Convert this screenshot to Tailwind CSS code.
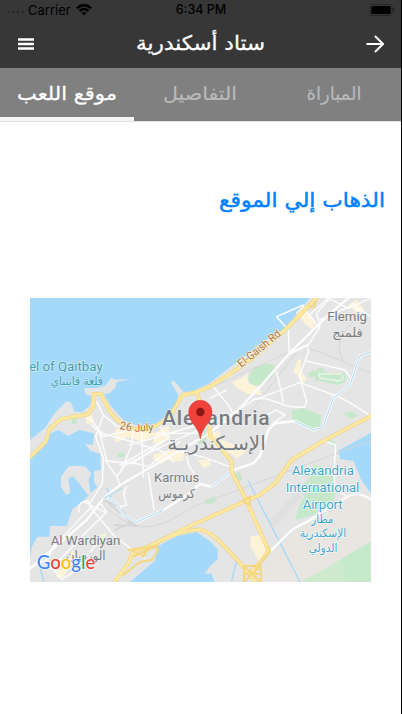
<!DOCTYPE html>
<html lang="ar">
<head>
<meta charset="utf-8">
<meta name="viewport" content="width=device-width, initial-scale=1">
<title>ستاد أسكندرية</title>
<script src="https://cdn.jsdelivr.net/npm/@tailwindcss/browser@4"></script>
</head>
<body class="bg-white overflow-hidden font-['DejaVu_Sans',sans-serif]">
<div class="w-[402px] h-[714px] border-r border-black flex flex-col overflow-hidden">
  <header class="h-[68px] shrink-0 bg-[#373737] flex flex-col">
    <div class="h-5 shrink-0 grid grid-cols-3 items-center pl-[7px] pr-[6px] text-[13px] leading-5 text-black font-['Inter',sans-serif]">
      <div class="flex items-center">
        <svg class="w-[18px] h-2 mt-1.5 shrink-0" viewBox="0 0 18 8" fill="#252525"><circle cx="1.5" cy="3" r="1.2"/><circle cx="6.3" cy="3" r="1.2"/><circle cx="11" cy="3" r="1.2"/><circle cx="15.6" cy="3" r="1.2"/></svg>
        <span class="ml-[3px] w-[43px] whitespace-nowrap">Carrier</span>
        <svg class="ml-[5px] w-4 h-3 shrink-0" viewBox="0 0 16 12" fill="none" stroke="#000" stroke-width="2.4"><path d="M1 4.3Q8-2 15 4.3M3.6 7Q8 3 12.4 7"/><path d="M5.5 9Q8 6.8 10.5 9L8 11.5Z" fill="#000" stroke="none"/></svg>
      </div>
      <span class="text-center text-[12.5px] font-medium whitespace-nowrap">6:34 PM</span>
      <svg class="justify-self-end w-[26px] h-3" viewBox="0 0 26 12"><rect x=".8" y=".5" width="22.5" height="11" rx="3" fill="none" stroke="#252525"/><rect x="2.3" y="2" width="19.5" height="8" rx="1.5" fill="#000"/><path d="M24.7 4v4" stroke="#252525" stroke-width="1.2"/></svg>
    </div>
    <div class="h-12 grid grid-cols-[40px_1fr_40px] items-center text-white">
      <svg class="ml-[18px] w-4 h-3" viewBox="0 0 16 12" stroke="#fff" stroke-width="2.4"><path d="M0 1.5h16M0 6h16M0 10.5h16"/></svg>
      <svg class="justify-self-center w-[130px] h-8" viewBox="0 0 130 32" direction="rtl"><text x="129" y="22" font-size="20" fill="#fff" stroke="#fff" stroke-width=".3" textLength="129" lengthAdjust="spacingAndGlyphs">ستاد أسكندرية</text></svg>
      <svg class="ml-[5px] w-[18px] h-[18px]" viewBox="0 0 18 18" fill="none" stroke="#fff" stroke-width="2"><path d="M.5 9h16M9 1l8 8-8 8"/></svg>
    </div>
  </header>
  <nav class="h-[54px] shrink-0 bg-[#808080] grid grid-cols-3 border-b border-[#e2e2e2]">
    <div class="border-b-4 border-[#f5f5f5] flex justify-center">
      <svg class="w-[102px] h-12" viewBox="0 0 102 48" direction="rtl"><text x="101" y="32" font-size="19" fill="#fff" stroke="#fff" stroke-width=".3" textLength="100" lengthAdjust="spacingAndGlyphs">موقع اللعب</text></svg>
    </div>
    <div class="flex justify-center">
      <svg class="w-[76px] h-12" viewBox="0 0 76 48" direction="rtl"><text x="75" y="32" font-size="19" fill="#b9b9b9" stroke="#b9b9b9" stroke-width=".2" textLength="74" lengthAdjust="spacingAndGlyphs">التفاصيل</text></svg>
    </div>
    <div class="flex justify-center">
      <svg class="w-[56px] h-12" viewBox="0 0 56 48" direction="rtl"><text x="55.5" y="32" font-size="19" fill="#b9b9b9" stroke="#b9b9b9" stroke-width=".2" textLength="55" lengthAdjust="spacingAndGlyphs">المباراة</text></svg>
    </div>
  </nav>
  <main class="flex flex-col flex-1">
    <a class="mt-[59px] mr-4 self-end h-9">
      <svg class="w-[167px] h-9" viewBox="0 0 167 36" direction="rtl"><text x="167" y="25.5" font-size="20" fill="#0080ff" stroke="#0080ff" stroke-width=".45" textLength="166" lengthAdjust="spacingAndGlyphs">الذهاب إلي الموقع</text></svg>
    </a>
    <div class="mt-[81px] ml-[30px] w-[341px] h-[284px]">
    <svg class="block w-full h-full" viewBox="30 24 1023 852" fill="none" stroke-linejoin="round" stroke-linecap="round">
      <rect x="30" y="24" width="1023" height="852" fill="#e5e5e5"/>
      <!-- Airport plains and south-east fields -->
      <path d="M1053 620L985 612 870 690 790 755 700 876H1053Z" fill="#e9e6e2"/>
      <path d="M845 876L1053 755V876Z" fill="#cfe9cf"/>
      <path d="M962 808L1053 755V876H975Z" fill="#c6e8cb"/>
      <!-- Sea -->
      <path d="M30 24H870L795 115 745 145 650 217 565 282 520 302 492 307 462 273 452 275 475 315 467 345 447 370 412 398Q360 420 310 390L274 350 252 312 268 310 286 293 290 276 332 266 290 269 274 264 257 286 232 294 193 294 196 311 216 321 209 349 187 366 165 366 152 337 140 333 105 368 75 414 30 450Z" fill="#a5d9fb"/>
      <path d="M30 508L84 452 90 430 116 420 145 438 178 420 222 430 219 464 195 462 212 483 240 492 243 540 222 542 222 577 232 592 211 610 205 568 212 550 196 530 170 527 145 530 124 560 123 590 138 612 150 608 142 578 148 556 170 555 196 584 209 612 185 638 158 656 140 708H90L88 740 52 740 36 770 30 800Z" fill="#a5d9fb"/>
      <path d="M145 530L170 527 197 532 213 552 205 570 211 610 203 615 183 588 160 559 145 567 151 609 138 614 124 592 123 562Z" fill="#e5e5e5"/>
      <path d="M330 876L405 812 412 770 470 738 530 726 570 754 594 779 592 809 574 824 552 853 553 876Z" fill="#a5d9fb"/>
      <path d="M553 876L550 852 574 850 584 876Z" fill="#a5d9fb"/>
      <path d="M1053 428L955 482 960 507 1000 513 1022 566 1053 611Z" fill="#a5d9fb"/>
      <!-- Parks -->
      <g fill="#c5e8ca">
        <path d="M700 237Q730 213 765 225L763 248Q740 293 695 285 674 268 700 237Z"/>
        <path d="M814 361L850 354 903 376 902 409 876 416 818 394Z"/>
        <path d="M864 248L882 241 888 258 868 263ZM885 243Q911 222 916 248L974 248Q990 280 950 284L885 270ZM156 386L168 384 172 401 156 402ZM292 493L304 486 316 492 312 502 293 502ZM528 452L540 430 555 402 558 450 540 462ZM556 631L584 618 590 635 560 645ZM644 551L659 545 667 568 651 576ZM970 371L995 363 1012 376 996 387ZM920 445L944 455 950 469 935 463Z"/>
        <path d="M829 600L865 568 882 523 906 530 912 556 944 558 944 630 880 674 825 691 836 651 858 612Z"/>
      </g>
      <path d="M896 252L965 252Q976 269 955 273L900 264Z" stroke="#e9f4e9" stroke-width="4"/>
      <!-- Commercial blocks -->
      <g fill="#fdf3d8">
        <path d="M286 417L350 414 404 430 445 406 451 438 425 462 398 459 402 436 365 455 325 442 285 458ZM400 492L460 480 492 484 490 512 462 515 445 508 424 522 400 508Z"/>
        <path d="M636 276L668 263 682 248 684 278 720 294 724 315 680 311 650 292ZM827 69L848 48 885 94 880 122 852 98 838 75ZM820 247L832 212 845 206 841 242 860 266 845 284 833 254ZM196 382L217 374 222 398 200 403ZM693 738L720 735 744 795 714 811 690 765ZM560 438L598 420 600 446 638 462 680 475 672 491 650 505 632 490 590 477ZM534 511L568 507 572 524 549 534ZM105 842L150 808 157 780 170 805 130 862 110 862ZM240 735L260 728 246 758ZM602 262L630 247 636 257 612 269ZM985 45L1010 30 1032 60 1012 72Z"/>
      </g>
      <!-- Airport runway, rail lines -->
      <path d="M760 695L850 600" stroke="#e0e0e0" stroke-width="24"/>
      <g stroke="#d5d6d8" stroke-width="3">
        <path d="M255 650Q310 700 360 710 420 718 520 650L1053 452"/>
        <path d="M240 630Q310 640 330 700L285 720M268 642L345 705M285 705L355 708" stroke-width="6"/>
        <path d="M560 300L700 235 800 190 855 172 910 190 1053 250M640 410Q710 350 750 290L830 186M1000 95Q930 160 975 220"/>
      </g>
      <!-- Canals -->
      <g stroke="#a5d9fb" stroke-width="4">
        <path d="M685 573L840 876M55 815L72 876M650 815L635 870M260 593L272 622"/>
      </g>
      <!-- Minor roads -->
      <g stroke="#fcfcfc" stroke-width="4.5">
        <path d="M1053 185L1020 197 990 285 940 325 908 412 880 420 825 393 765 400 745 420 720 498 700 520 640 540 575 590 540 582 500 615 430 660 350 696 310 675 290 640 265 625" stroke-width="8"/>
        <path d="M1053 378L990 338 950 318 895 298 840 277 770 305 700 330 640 370 570 405 445 460 315 525 290 560 300 585"/>
        <path d="M985 24L925 75 810 188 720 290 640 375 560 435 300 585 250 625 200 690 30 835" stroke-width="7"/>
        <path d="M930 24L890 70 900 110 865 165 808 193 805 120 770 80 850 45M850 50L898 115M868 75L925 24L985 55 1053 24M900 90L1000 45 1053 80M1000 40L1040 100"/>
        <path d="M808 190L860 165 866 185 838 258 860 335 853 352 810 350 735 325 700 328M858 213L975 240 990 262M770 245L790 335M580 290L630 352 642 378M570 325L620 300"/>
        <path d="M230 335L250 375 292 410 340 420M250 375L227 440 250 505 247 580 210 640M215 405L250 440 335 418M210 385L245 430 320 450 430 485 460 515M240 430L262 520 290 560M255 512L355 522 390 530M340 420L335 465 300 550M425 455L300 525M450 440L340 520M480 455L390 525M420 410L470 480 545 500 630 530M410 430L550 430M500 500L508 530 540 578M385 550L402 660M330 465L480 420 560 398M365 430L370 560M320 590Q305 605 320 645L300 650"/>
        <path d="M745 420L765 395 795 375 770 360 730 380M177 664Q170 635 205 633L210 650 280 735 350 790 375 805M215 650L100 770 80 815 125 868 155 850 250 740M190 635L258 668 190 735 110 820M240 640L260 665M30 835L85 805"/>
        <path d="M920 455L947 465 942 550 945 600 985 620"/>
        <path d="M750 785L815 720 870 690 985 618Q1020 605 1053 628" stroke-width="7"/>
      </g>
      <path d="M1053 185L1020 197 990 285 940 325 908 412 880 420 825 393M635 543L575 590M430 660L350 696 310 675 290 640 265 625M250 625L305 595" stroke="#a9d8f2" stroke-width="3"/>
      <!-- Primary roads -->
      <g stroke="#efd480" stroke-width="12">
        <path d="M30 502L78 455 88 418 122 388 160 380 203 373 220 350 220 312 243 311 262 350Q290 405 345 417 400 423 447 382L487 316 530 306 570 290 650 238 700 202 795 120 890 24"/>
        <path d="M530 308L545 350 568 405 570 438 600 470 635 515 635 545 678 630 745 780 735 800 690 850"/>
        <path d="M1053 378L910 453 815 510 765 580 720 615 678 632 600 668 510 708 380 772 340 785 325 820 285 874"/>
        <path d="M415 755Q480 722 540 718 570 725 600 755L675 835 705 876"/>
      </g>
      <g stroke="#fde8a2" stroke-width="8">
        <path d="M30 502L78 455 88 418 122 388 160 380 203 373 220 350 220 312 243 311 262 350Q290 405 345 417 400 423 447 382L487 316 530 306 570 290 650 238 700 202 795 120 890 24"/>
        <path d="M530 308L545 350 568 405 570 438 600 470 635 515 635 545 678 630 745 780 735 800 690 850"/>
        <path d="M1053 378L910 453 815 510 765 580 720 615 678 632 600 668 510 708 380 772 340 785 325 820 285 874"/>
        <path d="M415 755Q480 722 540 718 570 725 600 755L675 835 705 876"/>
      </g>
      <g stroke="#f4d77e" stroke-width="6">
        <path d="M325 780L405 768 415 780 395 810 360 815 310 855M340 800L415 765M385 772L370 800 335 780M868 48Q885 60 887 35M672 828H722V876M672 828V876M722 828L672 876M672 828L722 876M672 852H722"/>
        <path d="M668 632L690 620 688 645ZM745 770L750 785 720 820 705 835"/>
      </g>
      <!-- Place labels -->
      <g font-family="Roboto, sans-serif" font-size="40" fill="#777c82" stroke="#f0f0f0" stroke-width="4" paint-order="stroke">
        <text x="922" y="93" textLength="119" lengthAdjust="spacingAndGlyphs">Flemig</text>
        <text x="402" y="576" textLength="136" lengthAdjust="spacingAndGlyphs">Karmus</text>
        <text x="92" y="764" textLength="209" lengthAdjust="spacingAndGlyphs">Al Wardiyan</text>
        <text x="426" y="404" font-size="63" font-weight="500" textLength="323" lengthAdjust="spacing">Alexandria</text>
        <g fill="#42a0ac" stroke="#d5edf8"><text x="27" y="242" font-size="40" textLength="221" lengthAdjust="spacingAndGlyphs">el of Qaitbay</text></g>
        <g fill="#3fa6cb" stroke="#fff">
          <text x="815" y="556" textLength="187" lengthAdjust="spacingAndGlyphs">Alexandria</text>
          <text x="797" y="606" textLength="221" lengthAdjust="spacingAndGlyphs">International</text>
          <text x="848" y="656" textLength="120" lengthAdjust="spacingAndGlyphs">Airport</text>
        </g>
        <g font-size="33" fill="#a57442" stroke="#fff3dc">
          <text transform="translate(664 233) rotate(-39)" textLength="155" lengthAdjust="spacingAndGlyphs">El-Gaish Rd</text>
          <text transform="translate(298 416) rotate(12)" textLength="36" lengthAdjust="spacingAndGlyphs">26</text>
          <text transform="translate(344 425) rotate(-3)" textLength="56" lengthAdjust="spacingAndGlyphs">July</text>
        </g>
      </g>
      <g font-family="DejaVu Sans, sans-serif" font-size="38" fill="#777c82" stroke="#f0f0f0" stroke-width="3" paint-order="stroke" direction="rtl">
        <text x="1028" y="140" textLength="91" lengthAdjust="spacingAndGlyphs">فلمنج</text>
        <text x="525" y="624" textLength="110" lengthAdjust="spacingAndGlyphs">كرموس</text>
        <text x="257" y="811" textLength="120" lengthAdjust="spacingAndGlyphs">الورديان</text>
        <text x="737" y="479" font-size="58" textLength="295" lengthAdjust="spacingAndGlyphs">الإسـكندريـة</text>
        <text x="249" y="284" fill="#42a0ac" stroke="#d5edf8" font-size="36" textLength="157" lengthAdjust="spacingAndGlyphs">قلعة قايتباي</text>
        <g fill="#3fa6cb" stroke="#fff" font-size="35">
          <text x="940" y="698" textLength="66" lengthAdjust="spacingAndGlyphs">مطار</text>
          <text x="979" y="742" textLength="140" lengthAdjust="spacingAndGlyphs">الإسكندرية</text>
          <text x="952" y="786" textLength="86" lengthAdjust="spacingAndGlyphs">الدولي</text>
        </g>
      </g>
      <!-- Marker -->
      <path d="M541 446C537 411 506 397 506 366A35 35 0 0 1 576 366C576 397 545 411 541 446Z" fill="#ef423b" stroke="#d5352e" stroke-width="1.5"/>
      <circle cx="541" cy="366" r="12.5" fill="#8b1715"/>
      <!-- Attribution -->
      <text x="50" y="838" font-family="Lato, sans-serif" font-size="58" font-weight="500" textLength="176" lengthAdjust="spacingAndGlyphs" stroke="#fff" stroke-width="4" paint-order="stroke"><tspan fill="#4285f4">G</tspan><tspan fill="#ea4335">o</tspan><tspan fill="#fbbc05">o</tspan><tspan fill="#4285f4">g</tspan><tspan fill="#34a853">l</tspan><tspan fill="#ea4335">e</tspan></text>
    </svg>
    </div>
  </main>
</div>
</body>
</html>
